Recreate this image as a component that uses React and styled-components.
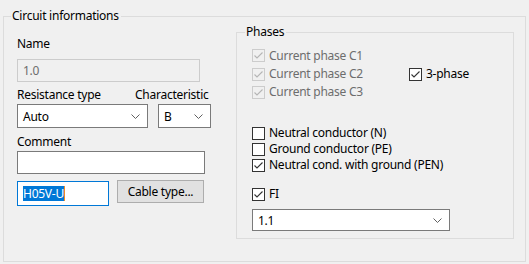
import React from "react";
import styled, { createGlobalStyle } from "styled-components";

const GlobalStyle = createGlobalStyle`
  html, body {
    margin: 0;
    padding: 0;
    background: #f0f0f0;
  }
  body {
    font-family: "Noto Sans", "Open Sans", sans-serif;
    font-size: 12px;
    letter-spacing: -0.25px;
    color: #000;
  }
`;

const Chevron = () => (
  <svg width="9" height="5" viewBox="0 0 9 5">
    <path d="M0.5 0.5 L4.5 4.5 L8.5 0.5" fill="none" stroke="#606060" strokeWidth="1" />
  </svg>
);

const Tick = ({ color }) => (
  <svg width="11" height="11" viewBox="0 0 11 11">
    <path d="M1.5 5.5 L4 8 L9.5 2.5" fill="none" stroke={color} strokeWidth="1.1" />
  </svg>
);

const App = () => {
  return (
    <>
      <GlobalStyle />
      <Outer>
        <Legend>Circuit informations</Legend>
        <Body>
          <LeftColumn>
            <Label top={12}>Name</Label>
            <TextBox disabled width={183} height={23} top={7}>1.0</TextBox>
            <LabelRow>
              <Label top={5} width={118}>Resistance type</Label>
              <Label top={5}>Characteristic</Label>
            </LabelRow>
            <SelectRow>
              <Select width={131}>
                <span>Auto</span>
                <Chevron />
              </Select>
              <Select width={53}>
                <span>B</span>
                <Chevron />
              </Select>
            </SelectRow>
            <Label top={6}>Comment</Label>
            <TextBox width={188} height={23} top={1} />
            <CableRow>
              <TextBox focused width={92} height={25}>
                <Selected>H05V-U</Selected>
              </TextBox>
              <Button>Cable type...</Button>
            </CableRow>
          </LeftColumn>
          <Phases>
            <Legend>Phases</Legend>
            <PhaseGrid>
              <Check disabled checked label="Current phase C1" />
              <span />
              <Check disabled checked label="Current phase C2" />
              <Check checked label="3-phase" />
              <Check disabled checked label="Current phase C3" />
              <span />
            </PhaseGrid>
            <ConductorList>
              <Check label="Neutral conductor (N)" />
              <Check label="Ground conductor (PE)" />
              <Check checked label="Neutral cond. with ground (PEN)" />
            </ConductorList>
            <FiRow>
              <Check checked label="FI" />
            </FiRow>
            <Select width={198} height={22}>
              <span>1.1</span>
              <Chevron />
            </Select>
          </Phases>
        </Body>
      </Outer>
    </>
  );
};

const Check = ({ checked, disabled, label }) => (
  <CheckRow disabled={disabled}>
    <Box disabled={disabled}>
      {checked && <Tick color={disabled ? "#b5b5b5" : "#333"} />}
    </Box>
    <span>{label}</span>
  </CheckRow>
);

export default App;

const Outer = styled.fieldset`
  margin: 8px 0 0 3px;
  padding: 0;
  width: 523px;
  height: 254px;
  box-sizing: border-box;
  border: 1px solid #dcdcdc;
  min-width: 0;
`;

const Legend = styled.legend`
  margin-left: 7px;
  padding: 0 2px 0 1px;
  line-height: 16px;
  font-size: 12px;
`;

const Body = styled.div`
  display: flex;
  align-items: flex-start;
`;

const LeftColumn = styled.div`
  display: flex;
  flex-direction: column;
  align-items: flex-start;
  width: 219px;
  padding-left: 13px;
`;

const Label = styled.div`
  line-height: 16px;
  margin-top: ${(p) => p.top || 0}px;
  width: ${(p) => (p.width ? `${p.width}px` : "auto")};
`;

const LabelRow = styled.div`
  display: flex;
`;

const TextBox = styled.div`
  box-sizing: border-box;
  width: ${(p) => p.width}px;
  height: ${(p) => p.height}px;
  margin-top: ${(p) => p.top || 0}px;
  display: flex;
  align-items: center;
  padding-left: 5px;
  background: ${(p) => (p.disabled ? "#f0f0f0" : "#fff")};
  color: ${(p) => (p.disabled ? "#6d6d6d" : "#000")};
  border: 1px solid
    ${(p) => (p.focused ? "#0078d7" : p.disabled ? "#cccccc" : "#7a7a7a")};
`;

const Selected = styled.span`
  background: #0078d7;
  color: #fff;
  line-height: 15px;
  border-right: 1px solid #f08a24;
`;

const SelectRow = styled.div`
  display: flex;
  gap: 10px;
  margin-top: 1px;
`;

const Select = styled.div`
  box-sizing: border-box;
  width: ${(p) => p.width}px;
  height: ${(p) => p.height || 24}px;
  display: flex;
  align-items: center;
  justify-content: space-between;
  padding: 0 7px 0 5px;
  background: #fff;
  border: 1px solid #7a7a7a;
`;

const CableRow = styled.div`
  display: flex;
  align-items: flex-start;
  gap: 8px;
  margin-top: 7px;
`;

const Button = styled.div`
  box-sizing: border-box;
  width: 87px;
  height: 23px;
  margin-top: -1px;
  display: flex;
  align-items: center;
  justify-content: center;
  background: #e1e1e1;
  border: 1px solid #adadad;
`;

const Phases = styled.fieldset`
  margin: 0;
  padding: 0 0 0 15px;
  width: 278px;
  height: 215px;
  box-sizing: border-box;
  border: 1px solid #dcdcdc;
  min-width: 0;
  & > legend {
    margin-left: -7px;
  }
`;

const PhaseGrid = styled.div`
  display: grid;
  grid-template-columns: 157px auto;
  grid-template-rows: 19px 18px 18px;
  align-items: center;
  margin-top: 6px;
`;

const ConductorList = styled.div`
  display: grid;
  grid-auto-rows: 16px;
  align-items: center;
  margin-top: 24px;
`;

const FiRow = styled.div`
  display: flex;
  height: 16px;
  align-items: center;
  margin: 13px 0 7px;
`;

const CheckRow = styled.div`
  display: flex;
  align-items: center;
  gap: 4px;
  line-height: 16px;
  color: ${(p) => (p.disabled ? "#6d6d6d" : "#000")};
`;

const Box = styled.div`
  box-sizing: border-box;
  width: 13px;
  height: 13px;
  display: flex;
  align-items: center;
  justify-content: center;
  background: ${(p) => (p.disabled ? "#f0f0f0" : "#fff")};
  border: 1px solid ${(p) => (p.disabled ? "#cccccc" : "#333333")};
`;
